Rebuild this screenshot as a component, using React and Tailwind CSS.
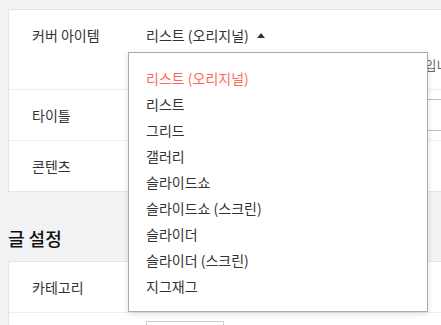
import React from 'react';

const items = [
  '리스트 (오리지널)',
  '리스트',
  '그리드',
  '갤러리',
  '슬라이드쇼',
  '슬라이드쇼 (스크린)',
  '슬라이더',
  '슬라이더 (스크린)',
  '지그재그',
];

const Dropdown = ({ selected }) => (
  <div className="absolute left-[-18px] top-[27px] z-10 w-[300px] border border-[#a5acb8] bg-white py-[12px] shadow-[0_2px_6px_rgba(0,0,0,0.12)]">
    {items.map((item) => (
      <div
        key={item}
        className={`flex h-[26px] items-center px-[17px] text-[14px] ${item === selected ? 'text-[#ff6a5c]' : 'text-[#333]'}`}
      >
        {item}
      </div>
    ))}
  </div>
);

const App = () => {
  const selected = '리스트 (오리지널)';

  return (
    <div className="h-[325px] w-[441px] overflow-hidden bg-[#f2f3f5] pl-[8px] pt-[9px] font-['Noto_Sans_CJK_KR','Noto_Sans',sans-serif] text-[#333]">
      <div className="w-[480px] border border-[#e3e5e9] bg-white">
        {/* cover item */}
        <div className="flex h-[80px] border-b border-[#eceef1] pt-[15px]">
          <div className="w-[137px] shrink-0 pl-[23px] text-[14px] leading-[20px]">커버 아이템</div>
          <div className="relative flex-1">
            <div className="flex items-center gap-[8px] text-[14px] leading-[20px]">
              <span>{selected}</span>
              <svg width="8" height="5" viewBox="0 0 8 5" className="mt-[1px]">
                <path d="M0 5 L4 0 L8 5 Z" fill="#333" />
              </svg>
            </div>
            <div className="ml-[-5px] mt-[10px] whitespace-nowrap text-[13px] leading-[20px] text-[#666]">
              커버 영역에 노출되는 게시글 목록 모양을 고르는 옵션입니다.
            </div>
            <Dropdown selected={selected} />
          </div>
        </div>

        {/* title */}
        <div className="flex h-[51px] items-center border-b border-[#eceef1]">
          <div className="w-[137px] shrink-0 pl-[23px] text-[14px]">타이틀</div>
          <div className="h-[32px] flex-1 border border-[#b7bec9] bg-white" />
        </div>

        {/* content */}
        <div className="flex h-[50px] items-center">
          <div className="w-[137px] shrink-0 pl-[23px] text-[14px]">콘텐츠</div>
        </div>
      </div>

      <h2 className="mb-[10px] mt-[33px] text-[18px] font-medium leading-[26px] text-[#111]">글 설정</h2>

      <div className="w-[480px] border border-[#e3e5e9] bg-white">
        <div className="flex h-[51px] items-center border-b border-[#eceef1]">
          <div className="w-[137px] shrink-0 pl-[23px] text-[14px]">카테고리</div>
        </div>
        <div className="flex h-[50px] pt-[8px]">
          <div className="w-[137px] shrink-0" />
          <div className="h-[32px] w-[78px] border border-[#c9ced6] bg-white" />
        </div>
      </div>
    </div>
  );
};

export default App;
